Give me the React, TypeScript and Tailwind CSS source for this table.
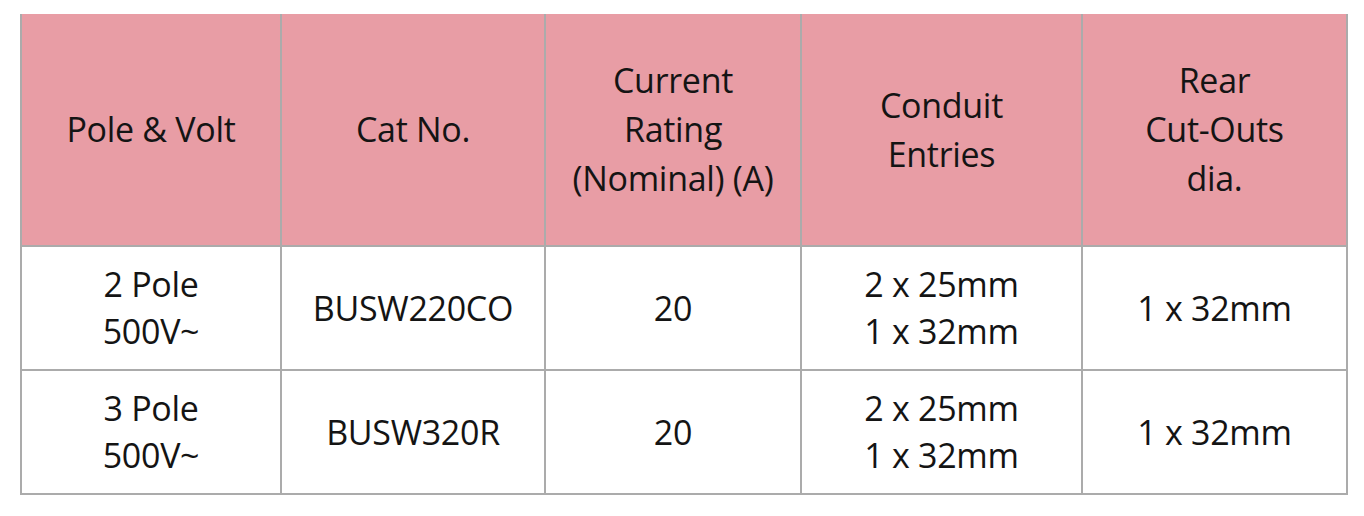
const HEADERS: string[][] = [
  ["Pole & Volt"],
  ["Cat No."],
  ["Current", "Rating", "(Nominal) (A)"],
  ["Conduit", "Entries"],
  ["Rear", "Cut-Outs", "dia."],
];

const ROWS: string[][][] = [
  [["2 Pole", "500V~"], ["BUSW220CO"], ["20"], ["2 x 25mm", "1 x 32mm"], ["1 x 32mm"]],
  [["3 Pole", "500V~"], ["BUSW320R"], ["20"], ["2 x 25mm", "1 x 32mm"], ["1 x 32mm"]],
];

const WIDTHS = ["w-[260px]", "w-[264px]", "w-[256px]", "w-[281px]", "w-[265px]"];

function Lines({ lines }: { lines: string[] }) {
  return (
    <>
      {lines.map((l, i) => (
        <div key={i}>{l}</div>
      ))}
    </>
  );
}

export default function App() {
  return (
    <div className="w-[1364px] h-[516px] bg-white pt-[14px] pl-[20px] font-['Open_Sans',sans-serif] text-[#141414]">
      <table className="border-collapse table-fixed w-[1326px]">
        <thead>
          <tr className="h-[232px] bg-[#e89da5]">
            {HEADERS.map((h, i) => (
              <th
                key={i}
                className={`${WIDTHS[i]} border-x-2 border-[#ababab] text-center align-middle font-normal text-[34px] leading-[49px] tracking-[-0.3px]`}
              >
                <Lines lines={h} />
              </th>
            ))}
          </tr>
        </thead>
        <tbody>
          {ROWS.map((row, r) => (
            <tr key={r} className="h-[124px]">
              {row.map((cell, i) => (
                <td
                  key={i}
                  className="border-2 border-[#ababab] text-center align-middle text-[34px] leading-[47px] tracking-[-0.3px]"
                >
                  <Lines lines={cell} />
                </td>
              ))}
            </tr>
          ))}
        </tbody>
      </table>
    </div>
  );
}
